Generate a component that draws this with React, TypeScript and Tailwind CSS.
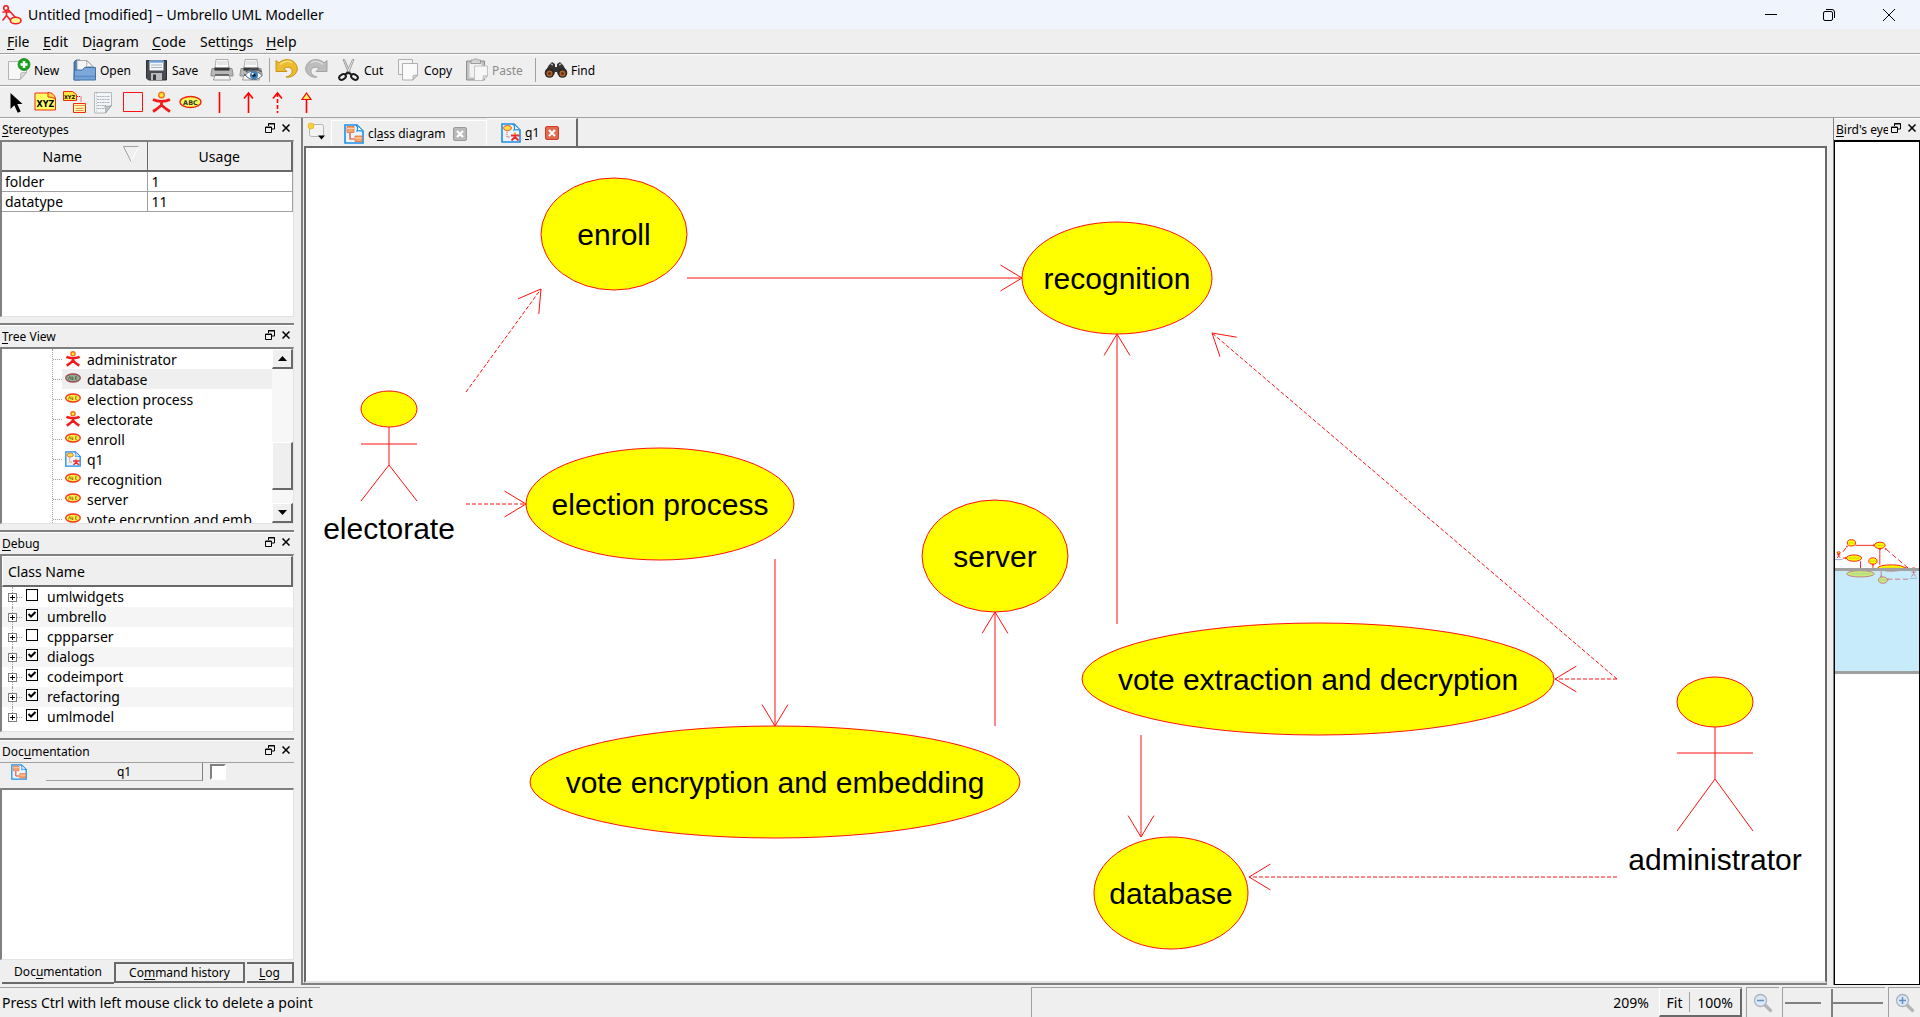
import React from "react";

const UI = "font-['Noto_Sans','Open_Sans',sans-serif]";

/* ---------- icons ---------- */

type IconProps = { className?: string };

function AppIcon() {
  return (
    <svg className="h-5 w-5 shrink-0" viewBox="0 0 20 20" fill="none" stroke="#ee2222" strokeWidth="1.6" strokeLinecap="round">
      <circle cx="4" cy="3" r="2.3" fill="#fff" />
      <path d="M1 7h7M4.5 5.5v5M4.5 10.500L1 15M4.500 10.500L8 14.500M6.500 5L13 12" />
      <ellipse cx="13.700" cy="15.500" rx="5.300" ry="3.300" fill="#ffff99" />
    </svg>
  );
}

function NewIcon() {
  return (
    <svg className="h-6 w-6 shrink-0" viewBox="0 0 24 24">
      <path d="M1.500 3.500h18v11l-6.500 7h-11.500z" fill="#f7f7f7" stroke="#b4b4b4" />
      <path d="M19.500 14.500c-3-.5-5 0-6 1 .4 2 .3 4-.5 6z" fill="#dcdcdc" stroke="#a0a0a0" strokeWidth=".7" />
      <circle cx="17" cy="6.500" r="6" fill="#1ba11b" stroke="#0b7d12" strokeWidth=".7" />
      <path d="M17 3v7M13.500 6.500h7" stroke="#fff" strokeWidth="2.600" />
    </svg>
  );
}

function OpenIcon() {
  return (
    <svg className="h-6 w-6 shrink-0" viewBox="0 0 24 24">
      <path d="M1 22V4l2-2h4v20z" fill="#4f7fb6" stroke="#315f96" strokeWidth=".8" />
      <path d="M4 2.500h10l7 7V17H4z" fill="#f5f5f5" stroke="#9a9a9a" strokeWidth=".8" />
      <path d="M13.500 2.500c.8 3 .4 5-.5 6.500 3-.7 5.500-.5 8 .5z" fill="#fff" stroke="#909090" strokeWidth=".8" />
      <path d="M1 22l.5-10h8l2-2.500H22.500V22z" fill="#7da7d8" stroke="#3f70ab" />
      <path d="M2 18.500h20" stroke="#6090c8" strokeWidth="2" />
    </svg>
  );
}

function SaveIcon() {
  return (
    <svg className="h-6 w-6 shrink-0" viewBox="0 0 24 24">
      <path d="M1.500 2.500h20V22H3.500l-2-2z" fill="#484b50" stroke="#2c2e31" />
      <path d="M4.500 2.500h14v10h-14z" fill="#f2f5f9" />
      <path d="M4.500 2.500h14v2.200h-14z" fill="#6da0dc" />
      <path d="M6 7h11M6 9.500h11" stroke="#a9b3bf" />
      <path d="M6 15h11v7H6z" fill="#b9bcc0" />
      <path d="M8 16.500h3V22H8z" fill="#3a3c40" />
    </svg>
  );
}

function PrintIcon({ preview = false }: { preview?: boolean }) {
  return (
    <svg className="h-6 w-6 shrink-0" viewBox="0 0 24 24">
      <path d="M6 1.500h12l1 9H5z" fill="#fafafa" stroke="#9b9b9b" strokeWidth=".8" />
      <path d="M7 4h10M7 6h10" stroke="#cfcfcf" />
      <path d="M2 10.500h3v1.500h14v-1.500h3l1 5.500v2H1v-2z" fill="#b7b7b7" stroke="#7d7d7d" strokeWidth=".8" />
      <path d="M4.500 9.500h15v3h-15z" fill="#35373a" />
      <path d="M5 17h14l1.500 5h-17z" fill="#f3f3f3" stroke="#8c8c8c" strokeWidth=".8" />
      <path d="M5 17h14" stroke="#55585c" strokeWidth="1.600" />
      {preview && (
        <g>
          <path d="M6.500 17c3-5 12-5 16.500.5-4 5.500-13 5.500-16.500-.5z" fill="#fff" stroke="#5c636b" />
          <circle cx="15" cy="17.300" r="4" fill="#3b7fc0" />
          <circle cx="15" cy="17.300" r="1.700" fill="#10253d" />
          <circle cx="13.700" cy="15.800" r="1" fill="#fff" />
          <path d="M7 14c4-4.500 11-4.500 15.500 0" fill="none" stroke="#50575f" strokeWidth="1.200" />
        </g>
      )}
    </svg>
  );
}

function UndoIcon({ redo = false }: { redo?: boolean }) {
  return (
    <svg className="h-6 w-6 shrink-0" viewBox="0 0 24 24">
      <g transform={redo ? "translate(24 0) scale(-1 1)" : undefined}>
        <path
          d="M1 2.500l3 2.300C8 .8 15 .5 19 4c4.500 4 4.500 10-.5 13.500-2.500 1.600-5 2-7.500 1.500 4-1 6.500-3.500 6-6.500-.5-3-4.500-4.500-8-2l3 3H1z"
          fill={redo ? "#bdbdbd" : "#edbb2e"}
          stroke={redo ? "#9d9d9d" : "#c38c0d"}
          strokeWidth=".9"
        />
        <path d="M5 6.500c4-4 9-3.800 12-1.500" fill="none" stroke={redo ? "#dadada" : "#fbe28a"} strokeWidth="1.500" />
      </g>
    </svg>
  );
}

function CutIcon() {
  return (
    <svg className="h-6 w-6 shrink-0" viewBox="0 0 24 24" fill="none">
      <path d="M6 1.500l1.500 0 6.500 14-2 1z" fill="#dcdcdc" stroke="#8b8b8b" strokeWidth=".8" />
      <path d="M17 1.500l-1.500 0-6.500 14 2 1z" fill="#f1f1f1" stroke="#8b8b8b" strokeWidth=".8" />
      <ellipse cx="5.500" cy="19" rx="3.600" ry="2.400" transform="rotate(-30 5.500 19)" stroke="#1a1a1a" strokeWidth="2" />
      <ellipse cx="17.500" cy="19" rx="3.600" ry="2.400" transform="rotate(30 17.500 19)" stroke="#1a1a1a" strokeWidth="2" />
      <path d="M8 16.500l3-2 3.500 2" stroke="#1a1a1a" strokeWidth="2" />
    </svg>
  );
}

function CopyIcon() {
  return (
    <svg className="h-6 w-6 shrink-0" viewBox="0 0 24 24" stroke="#a8a8a8" strokeWidth=".9">
      <path d="M1.500 1.500h14v15h-14z" fill="#f4f4f4" />
      <path d="M5.500 5.500h15v12l-5 4.500h-10z" fill="#fafafa" />
      <path d="M20.500 17.500c-2-.4-3.500-.4-4.500.3.300 1.500.2 2.800-.5 4.200z" fill="#d8d8d8" />
    </svg>
  );
}

function PasteIcon() {
  return (
    <svg className="h-6 w-6 shrink-0" viewBox="0 0 24 24">
      <path d="M1.500 3h18v19h-18z" fill="#c2c2c2" stroke="#8f8f8f" />
      <path d="M4.500 5.500h12v14h-12z" fill="#f2f2f2" />
      <path d="M6 2h2.500c.3-1.500 4-1.500 4.300 0h2.700v3.500H6z" fill="#d5d5d5" stroke="#8f8f8f" strokeWidth=".8" />
      <path d="M9.500 8h13v10l-5 4.500h-8z" fill="#f7f7f7" stroke="#bdbdbd" strokeWidth=".9" />
      <path d="M22.500 18c-2-.4-3.500-.4-4.500.3.300 1.500.2 2.800-.5 4.200z" fill="#dcdcdc" stroke="#a8a8a8" strokeWidth=".7" />
    </svg>
  );
}

function FindIcon() {
  return (
    <svg className="h-6 w-6 shrink-0" viewBox="0 0 24 24">
      <path d="M5 7l3-3 3 2v3h2V6l3-2 3 3 4 7v3H14l-1-3h-2l-1 3H1v-3z" fill="#35322f" />
      <path d="M7 6l2 1M17 6l-2 1" stroke="#aaa" strokeWidth="1.400" />
      <circle cx="5.500" cy="15" r="4.800" fill="#2b2927" />
      <circle cx="18.500" cy="15" r="4.800" fill="#2b2927" />
      <circle cx="5.500" cy="15.500" r="3" fill="#b5642a" />
      <circle cx="18.500" cy="15.500" r="3" fill="#b5642a" />
      <circle cx="5.500" cy="15.500" r="1.600" fill="#6a3312" />
      <circle cx="18.500" cy="15.500" r="1.600" fill="#6a3312" />
    </svg>
  );
}

const toolGlyphs: { name: string; glyph: React.ReactNode }[] = [
  { name: "Select", glyph: <path d="M5.500 2v16l3.800-3.800 3.400 7.600 3-1.300-3.400-7.500h5.200z" fill="#000" /> },
  {
    name: "Note label",
    glyph: (
      <g>
        <path d="M1 2h15l5.500 5v12H1z" fill="#ffff66" stroke="#f52a10" />
        <path d="M14 1.500c4 0 7 2.500 7.500 7-2-2-5-2.500-7.500-2.500z" fill="#ffd94a" stroke="#f52a10" />
        <text x="11.500" y="15.500" textAnchor="middle" fontSize="8" fontWeight="700" fontFamily="DejaVu Sans">XYZ</text>
      </g>
    ),
  },
  {
    name: "Anchor",
    glyph: (
      <g>
        <path d="M.5.500h9l4 3v6h-13z" fill="#ffe53d" stroke="#f52a10" />
        <text x="6.500" y="8" textAnchor="middle" fontSize="5" fontWeight="700" fontFamily="DejaVu Sans">XYZ</text>
        <path d="M14 5.500h4v6" fill="none" stroke="#f00" strokeDasharray="1 1" />
        <path d="M10.500 12.500h12v9h-12z" fill="#ffffa8" stroke="#f52a10" />
        <path d="M10.500 14.500h12M12.500 17.500h8M12.500 19.500h8" stroke="#f58b5a" />
      </g>
    ),
  },
  {
    name: "Note",
    glyph: (
      <g>
        <path d="M2.500 1.500h17v13l-6 7.500h-11z" fill="#f2f4f6" stroke="#b5b9bd" />
        <path d="M5 5.500h13M5 8.500h13M5 11.500h13M5 14.500h9M5 17.500h8" stroke="#9da8b5" strokeWidth=".8" strokeDasharray="2 .5" />
        <path d="M4.500 2v19" stroke="#b8c0c8" strokeDasharray="1 1.500" />
        <path d="M19.500 14.500l-6 7.500c.5-3 .3-5-.7-7 2.500.5 4.700.3 6.700-.5z" fill="#bfc3c7" stroke="#94989c" strokeWidth=".7" />
      </g>
    ),
  },
  { name: "Box", glyph: <path d="M2.500 1.500h19v19h-19z" fill="none" stroke="#f11" strokeWidth="1" /> },
  {
    name: "Actor",
    glyph: (
      <g>
        <path d="M3 8.500c3 1.500 5 1.800 8.500 1.800s5.500-.3 8.500-1.800M11.500 9v6M11.500 13.500c-2 3-4.500 4.500-8.500 7M11.500 13.500c2 3 4.500 4.500 8.500 7" fill="none" stroke="#f21a1a" strokeWidth="2.800" />
        <circle cx="11.500" cy="4" r="2.800" fill="#ffee33" stroke="#f5701a" strokeWidth="1.400" />
      </g>
    ),
  },
  {
    name: "Use case",
    glyph: (
      <g>
        <ellipse cx="11.500" cy="11" rx="10.500" ry="5.500" fill="#ffff5a" stroke="#ee2211" strokeWidth="1.300" />
        <text x="11.500" y="13.500" textAnchor="middle" fontSize="6.500" fontWeight="700" fontFamily="DejaVu Sans" fill="#333">ABC</text>
      </g>
    ),
  },
  { name: "Association", glyph: <path d="M11.500 1v21" stroke="#f00" strokeWidth="1.600" /> },
  { name: "Directed association", glyph: <path d="M11.500 22V2M7 7.500L11.500 2l4.500 5.500" fill="none" stroke="#f00" strokeWidth="1.600" /> },
  {
    name: "Dependency",
    glyph: (
      <g fill="none" stroke="#f00" strokeWidth="1.600">
        <path d="M11.500 2v20" strokeDasharray="4 2" />
        <path d="M7 7.500L11.500 2l4.500 5.500" />
      </g>
    ),
  },
  {
    name: "Generalization",
    glyph: (
      <g stroke="#f00" strokeWidth="1.600">
        <path d="M11.500 22V8" />
        <path d="M7 8.500L11.500 2l4.500 6.500z" fill="#ffee55" strokeWidth="1.200" />
      </g>
    ),
  },
];

function ActorMini() {
  return (
    <svg className="h-4 w-4 shrink-0" viewBox="0 0 23 23">
      <path d="M2 8.500c3 1.500 6 1.800 9.500 1.800s6.500-.3 9.500-1.800M11.500 9v6M11.500 13.500c-2 3-5 5-9 7.500M11.500 13.500c2 3 5 5 9 7.500" fill="none" stroke="#f21a1a" strokeWidth="3.600" />
      <circle cx="11.500" cy="4" r="3" fill="#ffee33" stroke="#f5701a" strokeWidth="2" />
    </svg>
  );
}

function UseCaseMini({ muted = false }: { muted?: boolean }) {
  return (
    <svg className="h-4 w-4 shrink-0" viewBox="0 0 16 16">
      <ellipse cx="8" cy="7" rx="7.300" ry="4" fill={muted ? "#8db08a" : "#ffee44"} stroke={muted ? "#a04a55" : "#f5301a"} strokeWidth="1.300" />
      <path d="M3.500 8.500l1.300-3 1.200 3M7 5.500v3h1.500M7 7h1.500M12 5.800h-1.500v2.500H12" fill="none" stroke={muted ? "#555" : "#8a6414"} strokeWidth=".8" />
    </svg>
  );
}

function DiagramIcon({ kind, className = "" }: IconProps & { kind: "class" | "usecase" }) {
  return (
    <svg className={"shrink-0 " + className} viewBox="0 0 20 20">
      <path d="M1 1h12l6 6v12H1z" fill="#e9f5fe" stroke="#1f8fe8" strokeWidth="1.600" />
      <path d="M12 1c2 2 2 4 1 6 2-.6 4-.6 6 .2" fill="#fff" stroke="#1f8fe8" strokeWidth="1.200" />
      {kind === "class" ? (
        <g>
          <path d="M3 2.500h7v6H3zM11 12h7v5.500h-7z" fill="#f5a46a" stroke="#e2703a" strokeWidth=".8" />
          <path d="M3 4.500h7M11 14h7" stroke="#fbd3b2" />
          <path d="M6 9v6h4.500" fill="none" stroke="#e03c1c" strokeWidth="1.200" />
        </g>
      ) : (
        <g>
          <ellipse cx="6.500" cy="5" rx="4" ry="2.500" fill="#ffe04a" stroke="#e65a1c" />
          <path d="M6 8.500V14h3" fill="none" stroke="#f05a4a" strokeDasharray="1.500 .7" />
          <path d="M10 12.500h8.500M14 11v3.500M14 14l-3.500 3.500M14 14l3.500 3.500" stroke="#ee2a2a" strokeWidth="1.800" />
          <circle cx="14" cy="10.500" r="1.200" fill="#f4a63a" />
        </g>
      )}
    </svg>
  );
}

function TabClose({ active = false }: { active?: boolean }) {
  return (
    <svg className="h-3.5 w-3.5" viewBox="0 0 14 14">
      <rect x=".5" y=".5" width="13" height="13" rx="1.500" fill={active ? "#e0694f" : "#b9b9b9"} stroke={active ? "#cc3d22" : "#9b9b9b"} />
      <path d="M4 4l6 6M10 4l-6 6" stroke="#fff" strokeWidth="2.200" />
    </svg>
  );
}

function Magnifier({ plus = false }: { plus?: boolean }) {
  return (
    <svg className="h-5 w-5" viewBox="0 0 20 20">
      <path d="M11.500 11.500l6 6" stroke="#b5b5b5" strokeWidth="3.200" strokeLinecap="round" />
      <circle cx="7.500" cy="7.500" r="6" fill="#dbe9f7" stroke="#a9b3bd" strokeWidth="1.300" />
      <path d={plus ? "M4 7.500h7M7.500 4v7" : "M4 7.500h7"} stroke="#6590c0" strokeWidth="1.500" />
    </svg>
  );
}

/* ---------- small pieces ---------- */

/* Text whose mnemonic letter (at index `at`) is underlined. */
function Mnemonic({ text, at }: { text: string; at: number }) {
  return (
    <span className="whitespace-pre">
      {text.slice(0, at)}
      <span className="underline underline-offset-2">{text[at]}</span>
      {text.slice(at + 1)}
    </span>
  );
}

function DockHeader({ text, at }: { text: string; at: number }) {
  return (
    <div className="flex h-[22px] shrink-0 items-center border-t border-white bg-[#efefef] pl-0.5">
      <h2 className="min-w-0 flex-1 overflow-hidden text-[12px] leading-5">
        <Mnemonic text={text} at={at} />
      </h2>
      <button aria-label={"Float " + text} className="mb-1 flex h-4 w-4 shrink-0 items-center justify-center">
        <svg className="h-2.5 w-2.5" viewBox="0 0 10 10" fill="none" stroke="#000">
          <path d="M3.500 3V.5h6V6H7M3 1h7" />
          <path d="M.5 4h6v5.500h-6zM0 4.500h7" />
        </svg>
      </button>
      <button aria-label={"Close " + text} className="mb-1 flex h-4 w-4 shrink-0 items-center justify-center">
        <svg className="h-2 w-2" viewBox="0 0 8 8" stroke="#000" strokeWidth="1.500">
          <path d="M.5.5l7 7M7.500.5l-7 7" />
        </svg>
      </button>
    </div>
  );
}

function ToolButton({ icon, label, name, width, disabled }: { icon: React.ReactNode; label?: string; name?: string; width: string; disabled?: boolean }) {
  return (
    <button disabled={disabled} aria-label={name ?? label} className={"flex shrink-0 items-center gap-[3px] whitespace-nowrap text-[12px] text-black disabled:text-[#8b8b8b] " + width}>
      {icon}
      {label && <span className="pt-0.5">{label}</span>}
    </button>
  );
}

function Separator() {
  return <div className="h-6 w-px shrink-0 bg-[#a0a0a0]" />;
}

/* ---------- diagram ---------- */

const useCases = [
  { name: "enroll", cx: 308, cy: 86, rx: 73 },
  { name: "recognition", cx: 811, cy: 130, rx: 95 },
  { name: "election process", cx: 354, cy: 356, rx: 134 },
  { name: "server", cx: 689, cy: 408, rx: 73 },
  { name: "vote encryption and embedding", cx: 469, cy: 634, rx: 245 },
  { name: "vote extraction and decryption", cx: 1012, cy: 531, rx: 236 },
  { name: "database", cx: 865, cy: 745, rx: 77 },
];

const actors = [
  { name: "electorate", x: 83, top: 243, rx: 28, ry: 18, arm: 296, hip: 317, foot: 353, base: 391 },
  { name: "administrator", x: 1409, top: 529, rx: 38, ry: 25, arm: 605, hip: 631, foot: 683, base: 722 },
];

const links: { p: [number, number, number, number]; dashed?: boolean }[] = [
  { p: [381, 130, 716, 130] },
  { p: [160, 244, 235, 141], dashed: true },
  { p: [160, 356, 220, 356], dashed: true },
  { p: [469, 411, 469, 578] },
  { p: [689, 578, 689, 464] },
  { p: [811, 476, 811, 186] },
  { p: [835, 587, 835, 689] },
  { p: [1311, 531, 1249, 531], dashed: true },
  { p: [1311, 531, 906, 185], dashed: true },
  { p: [1311, 729, 943, 729], dashed: true },
];

function arrowHead([x1, y1, x2, y2]: [number, number, number, number]) {
  const a = Math.atan2(y1 - y2, x1 - x2);
  const end = (d: number) => `${(x2 + 25 * Math.cos(a + d)).toFixed(1)} ${(y2 + 25 * Math.sin(a + d)).toFixed(1)}`;
  return `M${end(0.54)}L${x2} ${y2}L${end(-0.54)}`;
}

function Diagram({ mini = false }: { mini?: boolean }) {
  return (
    <g stroke="#ff1010" strokeWidth={mini ? 16 : 1} fill="none">
      {links.map((l, i) => (
        <g key={i}>
          <path d={`M${l.p[0]} ${l.p[1]}L${l.p[2]} ${l.p[3]}`} strokeDasharray={l.dashed ? (mini ? "90 50" : "4 2") : undefined} />
          <path d={arrowHead(l.p)} />
        </g>
      ))}
      {useCases.map((u) => (
        <g key={u.name}>
          <ellipse cx={u.cx} cy={u.cy} rx={u.rx} ry="56" fill="#ffff00" />
          {mini ? (
            <path d={`M${u.cx - u.rx * 0.7} ${u.cy}h${u.rx * 1.4}`} stroke="#a0a020" strokeWidth="9" />
          ) : (
            <text x={u.cx} y={u.cy + 11} textAnchor="middle" fontSize="30" fill="#000" stroke="none">{u.name}</text>
          )}
        </g>
      ))}
      {actors.map((a) => (
        <g key={a.name}>
          <ellipse cx={a.x} cy={a.top + a.ry} rx={a.rx} ry={a.ry} fill="#ffff00" />
          <path d={`M${a.x} ${a.top + a.ry * 2}V${a.hip}M${a.x - a.rx} ${a.arm}h${a.rx * 2}M${a.x - a.rx} ${a.foot}L${a.x} ${a.hip}L${a.x + a.rx} ${a.foot}`} />
          {mini ? (
            <path d={`M${a.x - 70} ${a.base - 8}h140`} stroke="#8f9cc0" />
          ) : (
            <text x={a.x} y={a.base} textAnchor="middle" fontSize="30" fill="#000" stroke="none">{a.name}</text>
          )}
        </g>
      ))}
    </g>
  );
}

/* ---------- docks ---------- */

const treeItems = [
  { name: "administrator", kind: "actor" },
  { name: "database", kind: "muted" },
  { name: "election process", kind: "case" },
  { name: "electorate", kind: "actor" },
  { name: "enroll", kind: "case" },
  { name: "q1", kind: "diagram" },
  { name: "recognition", kind: "case" },
  { name: "server", kind: "case" },
  { name: "vote encryption and emb", kind: "case" },
];

const debugItems = [
  { name: "umlwidgets", on: false },
  { name: "umbrello", on: true },
  { name: "cppparser", on: false },
  { name: "dialogs", on: true },
  { name: "codeimport", on: true },
  { name: "refactoring", on: true },
  { name: "umlmodel", on: true },
];

const sunken = "border-l-2 border-t-2 border-b border-r border-l-[#808080] border-t-[#808080] border-b-[#e3e3e3] border-r-[#e3e3e3] bg-white";
const raised = "border-b-2 border-r-2 border-l border-t border-b-[#696969] border-r-[#696969] border-l-white border-t-white bg-[#efefef]";

function Stereotypes() {
  return (
    <section className="flex h-[199px] shrink-0 flex-col">
      <DockHeader text="Stereotypes" at={0} />
      <div className={"flex-1 " + sunken}>
        <table className="w-[291px] table-fixed border-collapse text-[14px]">
          <thead>
            <tr className="h-[29px] bg-[#efefef]">
              <th className="relative w-[145px] border-b-2 border-r border-[#696969] pr-6 text-center font-normal">
                Name
                <svg className="absolute right-2 top-1 h-4 w-4" viewBox="0 0 16 16" fill="none">
                  <path d="M15.500.500L8 15.500" stroke="#fff" />
                  <path d="M8 15.500L.500.500h15" stroke="#a0a0a0" />
                </svg>
              </th>
              <th className="border-b-2 border-r-2 border-[#696969] text-center font-normal">Usage</th>
            </tr>
          </thead>
          <tbody>
            {[["folder", "1"], ["datatype", "11"]].map(([n, u]) => (
              <tr key={n} className="h-5">
                <td className="border-b border-r border-[#a0a0a0] pl-[3px] leading-[19px]">{n}</td>
                <td className="border-b border-r border-[#a0a0a0] pl-1 leading-[19px]">{u}</td>
              </tr>
            ))}
          </tbody>
        </table>
      </div>
    </section>
  );
}

function TreeView() {
  return (
    <section className="flex h-[199px] shrink-0 flex-col">
      <DockHeader text="Tree View" at={0} />
      <div className={"flex min-h-0 flex-1 overflow-hidden " + sunken}>
        <ul className="ml-[50px] min-w-0 flex-1 border-l border-dotted border-[#a0a0a0] text-[14px]">
          {treeItems.map((t) => (
            <li key={t.name} className="flex h-5 items-center">
              <span className="w-[9px] shrink-0 border-t border-dotted border-[#a0a0a0]" />
              <span className={"flex h-5 min-w-0 flex-1 items-center gap-1.5 pl-[3px] leading-5 " + (t.kind === "muted" ? "bg-[#efefef]" : "")}>
                {t.kind === "actor" ? <ActorMini /> : t.kind === "diagram" ? <DiagramIcon kind="usecase" className="h-4 w-4" /> : <UseCaseMini muted={t.kind === "muted"} />}
                <span className="whitespace-nowrap pt-0.5">{t.name}</span>
              </span>
            </li>
          ))}
        </ul>
        <div className="flex w-[21px] shrink-0 flex-col bg-[#f7f7f7]">
          <button aria-label="Scroll up" className={"flex h-5 items-center justify-center " + raised}>
            <svg className="h-[5px] w-[9px]" viewBox="0 0 9 5"><path d="M0 5L4.500 0L9 5z" /></svg>
          </button>
          <div className="h-[73px]" />
          <div className={"h-[48px] " + raised} />
          <div className="flex-1" />
          <button aria-label="Scroll down" className={"flex h-5 items-center justify-center " + raised}>
            <svg className="h-[5px] w-[9px]" viewBox="0 0 9 5"><path d="M0 0L4.500 5L9 0z" /></svg>
          </button>
        </div>
      </div>
    </section>
  );
}

function Debug() {
  return (
    <section className="flex h-[200px] shrink-0 flex-col">
      <DockHeader text="Debug" at={0} />
      <div className={"flex-1 " + sunken}>
        <div className={"flex h-[31px] items-center pl-[5px] text-[14px] " + raised}>Class Name</div>
        <ul className="text-[14px]">
          {debugItems.map((d, i) => (
            <li key={d.name} className={"relative flex h-5 items-center pl-1.5 " + (i % 2 ? "bg-[#f5f5f5]" : "")}>
              <span className={"absolute left-[10px] top-0 border-l border-dotted border-[#a0a0a0] " + (i === 6 ? "h-2.5" : "h-5")} />
              <button aria-label={"Expand " + d.name} className="relative h-[9px] w-[9px] border border-[#808080] bg-white">
                <svg className="h-[7px] w-[7px]" viewBox="0 0 7 7" stroke="#000"><path d="M1 3.500h5M3.500 1v5" /></svg>
              </button>
              <span className="mr-1 w-[5px] border-t border-dotted border-[#a0a0a0]" />
              <label className="flex items-center gap-[9px]">
                <span className="relative mb-1 h-3 w-3">
                  <input type="checkbox" defaultChecked={d.on} className="peer block h-3 w-3 appearance-none border border-black bg-white" />
                  <svg className="pointer-events-none absolute left-0 top-0 hidden h-3 w-3 peer-checked:block" viewBox="0 0 12 12" fill="none" stroke="#000" strokeWidth="2">
                    <path d="M2.500 5l2.500 2.500L9.500 3" />
                  </svg>
                </span>
                <span className="leading-5">{d.name}</span>
              </label>
            </li>
          ))}
        </ul>
      </div>
    </section>
  );
}

function Documentation() {
  return (
    <section className="flex min-h-0 flex-1 flex-col">
      <DockHeader text="Documentation" at={3} />
      <div className="flex h-[26px] shrink-0 items-start border-t border-[#a0a0a0] pl-[11px] text-[12px]">
        <DiagramIcon kind="class" className="mt-px h-4 w-4" />
        <button className="ml-[19px] h-[18px] w-[157px] border-b border-r border-b-[#a0a0a0] border-r-[#808080] text-center leading-[18px]">q1</button>
        <input type="checkbox" aria-label="Lock documentation" className="ml-[7px] mt-px h-4 w-4 appearance-none border-2 border-b-white border-l-[#808080] border-r-white border-t-[#808080] bg-white" />
      </div>
      <textarea aria-label="Documentation text" className={"min-h-0 w-full flex-1 resize-none " + sunken} />
      <div role="tablist" className="mt-0.5 flex h-[23px] shrink-0 items-start pl-0.5 text-[12px]">
        <button role="tab" aria-selected="true" className="h-[22px] w-[112px] border-b-2 border-b-[#696969]">
          <Mnemonic text="Documentation" at={3} />
        </button>
        <button role="tab" className="h-[21px] w-[131px] border-2 border-[#696969] leading-4">
          <Mnemonic text="Command history" at={2} />
        </button>
        <button role="tab" className="ml-0.5 h-[21px] w-[47px] border-2 border-l-0 border-[#696969] leading-4">
          <Mnemonic text="Log" at={0} />
        </button>
      </div>
    </section>
  );
}

function DockGap() {
  return <div className="h-2 shrink-0 border-b-2 border-[#808080] bg-[#efefef]" />;
}

/* ---------- page ---------- */

const menus: [string, number, string][] = [
  ["File", 0, "w-[36px]"],
  ["Edit", 0, "w-[39px]"],
  ["Diagram", 1, "w-[70px]"],
  ["Code", 0, "w-[48px]"],
  ["Settings", 5, "w-[66px]"],
  ["Help", 0, "w-[48px]"],
];

export default function App() {
  return (
    <div className={"flex h-screen flex-col overflow-hidden bg-[#efefef] text-black " + UI}>
      <header className="flex h-[29px] shrink-0 items-center bg-[#f0f4fc]">
        <span className="ml-0.5"><AppIcon /></span>
        <h1 className="ml-1.5 flex-1 text-[14px]">Untitled [modified] – Umbrello UML Modeller</h1>
        <button aria-label="Minimize" className="flex h-7 w-[58px] items-center justify-center">
          <svg className="h-3 w-3" viewBox="0 0 12 12" stroke="#000"><path d="M0 5.500h12" /></svg>
        </button>
        <button aria-label="Restore" className="flex h-7 w-[58px] items-center justify-center">
          <svg className="h-3 w-3" viewBox="0 0 12 12" fill="none" stroke="#000">
            <rect x=".5" y="2.500" width="9" height="9" rx="1.500" />
            <path d="M3 .5h6a2.500 2.500 0 0 1 2.500 2.500v6" />
          </svg>
        </button>
        <button aria-label="Close" className="flex h-7 w-[62px] items-center justify-center">
          <svg className="h-3 w-3" viewBox="0 0 12 12" stroke="#000"><path d="M0 0l12 12M12 0L0 12" /></svg>
        </button>
      </header>

      <nav className="flex h-[25px] shrink-0 items-center border-b border-[#a0a0a0] pl-[7px] text-[14px]">
        {menus.map(([t, at, w]) => (
          <button key={t} className={"text-left " + w}><Mnemonic text={t} at={at} /></button>
        ))}
      </nav>

      <div role="toolbar" aria-label="Main" className="flex h-8 shrink-0 items-center border-b border-t border-b-[#a0a0a0] border-t-white pl-[7px]">
        <ToolButton icon={<NewIcon />} label="New" width="w-[66px]" />
        <ToolButton icon={<OpenIcon />} label="Open" width="w-[72px]" />
        <ToolButton icon={<SaveIcon />} label="Save" width="w-[65px]" />
        <ToolButton icon={<PrintIcon />} name="Print" width="w-[29px]" />
        <ToolButton icon={<PrintIcon preview />} name="Print preview" width="w-[30px]" />
        <Separator />
        <span className="w-[5px]" />
        <ToolButton icon={<UndoIcon />} name="Undo" width="w-[29px]" />
        <ToolButton icon={<UndoIcon redo />} name="Redo" width="w-[33px]" disabled />
        <ToolButton icon={<CutIcon />} label="Cut" width="w-[60px]" />
        <ToolButton icon={<CopyIcon />} label="Copy" width="w-[68px]" />
        <ToolButton icon={<PasteIcon />} label="Paste" width="w-[70px]" disabled />
        <Separator />
        <span className="w-2" />
        <ToolButton icon={<FindIcon />} label="Find" width="w-[60px]" />
      </div>

      <div role="toolbar" aria-label="Diagram tools" className="flex h-8 shrink-0 items-center border-b border-t border-b-[#a0a0a0] border-t-white pl-[5px]">
        {toolGlyphs.map((t) => (
          <button key={t.name} aria-label={t.name} className="w-[29px] shrink-0">
            <svg className="h-[23px] w-[23px]" viewBox="0 0 23 23">{t.glyph}</svg>
          </button>
        ))}
      </div>

      <div className="flex min-h-0 flex-1">
        <aside className="flex w-[294px] shrink-0 flex-col">
          <Stereotypes />
          <DockGap />
          <TreeView />
          <DockGap />
          <Debug />
          <DockGap />
          <Documentation />
        </aside>

        <main className="ml-[7px] flex min-w-0 flex-1 flex-col border-b-2 border-l-2 border-b-[#808080] border-l-[#808080]">
          <div role="tablist" className="flex h-7 shrink-0 items-end text-[12px]">
            <button aria-label="New diagram" className="ml-1 flex h-7 w-6 items-center">
              <svg className="h-5 w-5" viewBox="0 0 20 20">
                <path d="M2.500 4.500q0-2 2-2h10q2 0 2 2v8q0 2-2 2h-10q-2 0-2-2z" fill="#f3f3f3" stroke="#b5b5b5" />
                <circle cx="4" cy="4" r="3" fill="#f6cf3e" stroke="#eeb81f" strokeWidth=".8" />
                <path d="M11 13.500h7l-3.500 4z" fill="#000" />
              </svg>
            </button>
            <div className="flex h-[26px] w-[156px] items-center border-l border-r border-t border-white pl-3">
              <button role="tab" className="flex items-center gap-1">
                <DiagramIcon kind="class" className="h-5 w-5" />
                <Mnemonic text="class diagram" at={2} />
              </button>
              <button aria-label="Close class diagram" className="ml-2"><TabClose /></button>
            </div>
            <div className="flex h-7 w-[91px] items-center border-r-2 border-t border-r-[#696969] border-t-white pl-[14px]">
              <button role="tab" aria-selected="true" className="flex items-center gap-1">
                <DiagramIcon kind="usecase" className="h-5 w-5" />
                <Mnemonic text="q1" at={0} />
              </button>
              <button aria-label="Close q1" className="ml-1.5"><TabClose active /></button>
            </div>
          </div>
          <div className="ml-px min-h-0 flex-1 border-2 border-b-[#e3e3e3] border-l-[#696969] border-r-[#696969] border-t-[#696969] bg-white font-['Liberation_Sans',Arial,sans-serif]">
            <svg className="block h-full w-full" role="img" aria-label="Use case diagram">
              <Diagram />
            </svg>
          </div>
        </main>

        <aside className="ml-1.5 flex w-[87px] shrink-0 flex-col border-l border-[#808080]">
          <DockHeader text="Bird's eye" at={0} />
          <div className="relative min-h-0 flex-1 overflow-hidden border border-t-2 border-black bg-white">
            <svg className="absolute left-0 top-0 h-full w-full" role="img" aria-label="Diagram overview">
              <g transform="translate(-1 396) scale(0.0565)"><Diagram mini /></g>
            </svg>
            <div className="absolute inset-x-0 top-[426px] h-[106px] border-y-[3px] border-[#a0a0a0] bg-[#8fd7f5]/50" />
          </div>
        </aside>
      </div>

      <footer className="flex h-8 shrink-0 items-stretch pt-0.5 text-[14px]">
        <div className="flex w-[320px] items-center border-t border-[#a0a0a0] pl-0.5">Press Ctrl with left mouse click to delete a point</div>
        <div className="flex-1" />
        <div className="flex w-[711px] items-center justify-end border-l border-t border-[#a0a0a0]">
          <span className="mr-2.5">209%</span>
          <div className={"flex h-full w-[83px] items-center " + raised}>
            <button className="flex-1">Fit</button>
            <span className="h-5 w-px bg-[#a0a0a0]" />
            <button className="w-[50px]">100%</button>
          </div>
        </div>
        <button aria-label="Zoom out" className="ml-1 flex w-[33px] items-center justify-center border-l border-t border-[#a0a0a0]"><Magnifier /></button>
        <div className="ml-[3px] flex w-[103px] items-center border-l border-t border-[#a0a0a0] px-0.5">
          <input
            type="range"
            aria-label="Zoom"
            defaultValue={42}
            className="h-full w-full appearance-none bg-transparent bg-[linear-gradient(#808080,#808080)] bg-[length:100%_2px] bg-center bg-no-repeat [&::-webkit-slider-thumb]:h-7 [&::-webkit-slider-thumb]:w-3 [&::-webkit-slider-thumb]:appearance-none [&::-webkit-slider-thumb]:border-r-2 [&::-webkit-slider-thumb]:border-[#808080] [&::-webkit-slider-thumb]:bg-[#efefef]"
          />
        </div>
        <button aria-label="Zoom in" className="ml-[3px] flex w-[32px] items-center justify-center border-l border-t border-[#a0a0a0]"><Magnifier plus /></button>
      </footer>
    </div>
  );
}
